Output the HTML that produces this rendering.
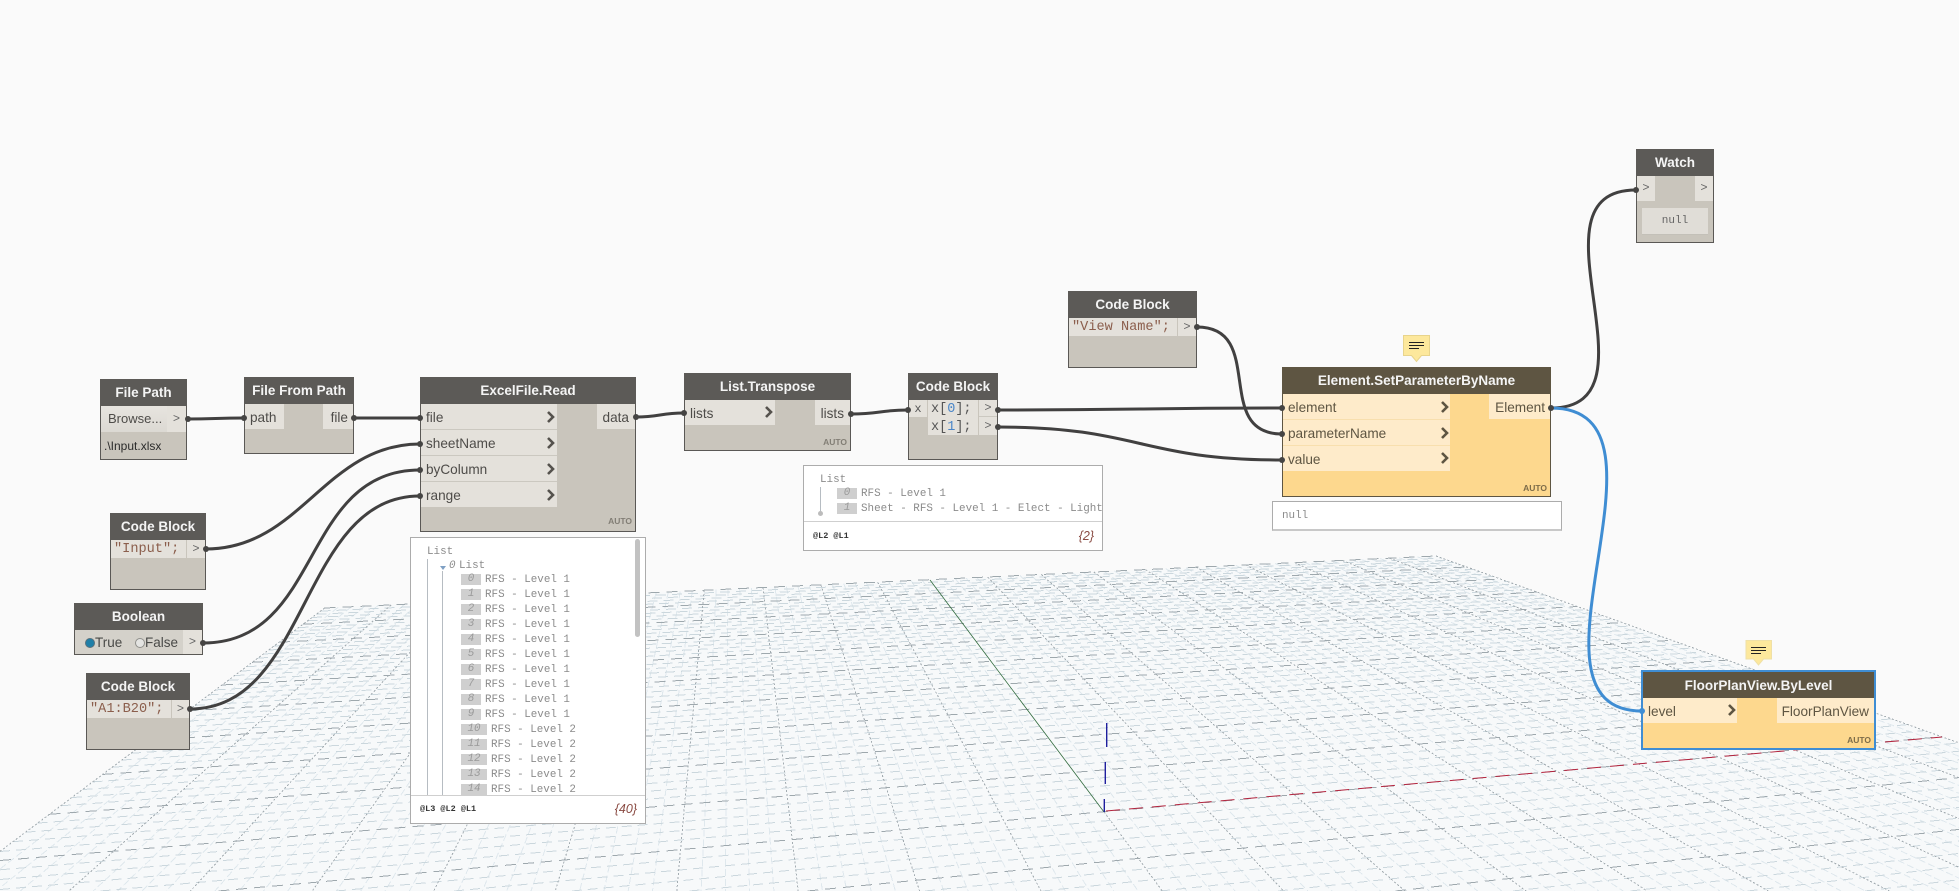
<!DOCTYPE html>
<html>
<head>
<meta charset="utf-8">
<title>Dynamo Graph</title>
<style>
html,body{margin:0;padding:0;width:1959px;height:891px;overflow:hidden;background:#fafafa}
#c{position:relative;width:1959px;height:891px;overflow:hidden;background:#fafafa;font-family:"Liberation Sans",sans-serif}
svg.l{position:absolute;left:0;top:0}
.n{position:absolute;box-sizing:border-box;background:#c9c5bc;border:1px solid #5a5855}
.y{background:#fdd88e;border-color:#5e5542}
.h{position:absolute;left:-1px;right:-1px;top:-1px;background:#5c5a57;color:#f4f4f4;font-weight:bold;font-size:13.5px;text-align:center}
.y .h{background:#5e5542}
.a{position:absolute;white-space:pre}
.r{position:absolute;background:#e4e1db;color:#4e4c49;font-size:13.6px;white-space:pre;box-sizing:border-box}
.y .r{background:#feebca;color:#5e5542}
.auto{position:absolute;font-size:8.5px;font-weight:bold;color:#827e75;right:3px;bottom:2px;line-height:11px}
.y .auto{color:#7d6c49}
.m{font-family:"Liberation Mono",monospace}
.s{color:#8b5e4c;font-size:13.6px}
.g{color:#666;font-size:12px;text-align:center}
.p{position:absolute;box-sizing:border-box;background:#fff;border:1px solid #acacac;overflow:hidden;font-family:"Liberation Mono",monospace;font-size:10.9px;color:#8b8b8b}
.p .i{position:absolute;height:11px;line-height:11px;background:#cfcfcf;color:#9a9a9a;font-style:italic;text-align:center;width:20px}
.p .i.w{width:26px}
.p .t{position:absolute;line-height:13px;white-space:pre}
.p .v{position:absolute;width:1px;background:#b6bcc2}
.p .f{position:absolute;left:0;right:0;bottom:0;background:#fff;border-top:1px solid #cfcfcf}
.f b{position:absolute;font-size:8.5px;color:#333;white-space:pre}
.f i{position:absolute;font-family:"Liberation Sans",sans-serif;font-size:12.5px;color:#8a4b43;white-space:pre}
</style>
</head>
<body>
<div id="c">
<svg class="l" id="grid" width="1959" height="891" viewBox="0 0 1959 891"></svg>

<svg class="l" width="1959" height="891" viewBox="0 0 1959 891">
<g fill="none">
<path d="M1106 811L1942 737" stroke="#b3233d" stroke-width="1" stroke-dasharray="14 9"/>
<path d="M1104 812L930 580" stroke="#2f6a3c" stroke-width="0.8"/>
<path d="M1106.7 723V747M1105.3 762V784M1104.3 799V812" stroke="#1f1f9e" stroke-width="1.4"/>
<g stroke="#414040" stroke-width="3" stroke-linecap="round">
<path d="M187 419C215 419 216 418 244 418"/>
<path d="M354 418C387 418 387 418 420 418"/>
<path d="M636 417C660 417 660 413 684 413"/>
<path d="M851 414C880 414 880 410 908 410"/>
<path d="M998 410C1140 410 1140 408 1282 408"/>
<path d="M998 427C1140 427 1140 460 1282 460"/>
<path d="M1197 327C1267 327 1212 434 1282 434"/>
<path d="M206 549C301 549 325 444 420 444"/>
<path d="M203 643C323 643 300 470 420 470"/>
<path d="M190 709C310 709 300 496 420 496"/>
<path d="M1551 408C1666 408 1521 190 1636 190"/>
</g>
<path d="M1551 408C1691 408 1506 711 1642 711" stroke="#3f8dd3" stroke-width="3" stroke-linecap="round"/>
</g>
</svg>

<!-- File Path -->
<div class="n" style="left:100px;top:379px;width:87px;height:81px">
<div class="h" style="height:27px;line-height:28px">File Path</div>
<div class="r" style="left:0;top:26px;width:66px;height:26px;line-height:26px;padding-left:7px;font-size:13px;background:linear-gradient(#e7e4df,#dcd9d3)">Browse...</div>
<div class="r m g" style="left:66px;top:26px;width:19px;height:26px;line-height:26px">&gt;</div>
<div class="a" style="left:3px;top:58px;font-size:12px;line-height:16px;color:#2b2b2b">.\Input.xlsx</div>
</div>

<!-- File From Path -->
<div class="n" style="left:244px;top:377px;width:110px;height:77px">
<div class="h" style="height:27px;line-height:28px">File From Path</div>
<div class="r" style="left:0;top:26px;width:39px;height:25px;line-height:27px;padding-left:5px">path</div>
<div class="r" style="right:0;top:26px;width:30px;height:25px;line-height:27px;text-align:right;padding-right:5px">file</div>
</div>

<!-- ExcelFile.Read -->
<div class="n" style="left:420px;top:377px;width:216px;height:155px">
<div class="h" style="height:27px;line-height:28px">ExcelFile.Read</div>
<div class="r" style="left:0;top:26px;width:136px;height:26px;line-height:27px;padding-left:5px;border-bottom:1px solid #cbc8c0">file</div>
<div class="r" style="left:0;top:52px;width:136px;height:26px;line-height:27px;padding-left:5px;border-bottom:1px solid #cbc8c0">sheetName</div>
<div class="r" style="left:0;top:78px;width:136px;height:26px;line-height:27px;padding-left:5px;border-bottom:1px solid #cbc8c0">byColumn</div>
<div class="r" style="left:0;top:104px;width:136px;height:25px;line-height:27px;padding-left:5px">range</div>
<div class="r" style="right:0;top:26px;width:38px;height:25px;line-height:27px;text-align:right;padding-right:6px">data</div>
<div class="auto" style="bottom:4px">AUTO</div>
</div>

<!-- Code Block Input -->
<div class="n" style="left:110px;top:513px;width:96px;height:77px">
<div class="h" style="height:27px;line-height:28px">Code Block</div>
<div class="r m s" style="left:0;top:26px;width:75px;height:18px;line-height:20px;padding-left:3px;overflow:hidden">"Input";</div>
<div class="r m g" style="left:76px;top:26px;width:18px;height:18px;line-height:18px">&gt;</div>
</div>

<!-- Boolean -->
<div class="n" style="left:74px;top:603px;width:129px;height:52px">
<div class="h" style="height:27px;line-height:28px">Boolean</div>
<div class="a" style="left:0;top:26px;width:108px;height:24px;background:#d4d1ca"></div>
<div class="r m g" style="left:108px;top:26px;width:19px;height:24px;line-height:24px">&gt;</div>
<div class="a" style="left:10px;top:34px;width:8px;height:8px;border-radius:50%;background:#1f7fa8;border:1px solid #58707c"></div>
<div class="a" style="left:20px;top:30px;font-size:13.5px;line-height:18px;color:#4a4a48">True</div>
<div class="a" style="left:60px;top:34px;width:8px;height:8px;border-radius:50%;background:#e4e4e2;border:1px solid #8f8f8b"></div>
<div class="a" style="left:70px;top:30px;font-size:13.5px;line-height:18px;color:#4a4a48">False</div>
</div>

<!-- Code Block A1 -->
<div class="n" style="left:86px;top:673px;width:104px;height:77px">
<div class="h" style="height:27px;line-height:28px">Code Block</div>
<div class="r m s" style="left:0;top:26px;width:84px;height:18px;line-height:20px;padding-left:3px;overflow:hidden">"A1:B20";</div>
<div class="r m g" style="left:85px;top:26px;width:17px;height:18px;line-height:18px">&gt;</div>
</div>

<!-- List.Transpose -->
<div class="n" style="left:684px;top:373px;width:167px;height:78px">
<div class="h" style="height:27px;line-height:28px">List.Transpose</div>
<div class="r" style="left:0;top:26px;width:90px;height:25px;line-height:27px;padding-left:5px">lists</div>
<div class="r" style="right:0;top:26px;width:35px;height:25px;line-height:27px;text-align:right;padding-right:6px">lists</div>
<div class="auto">AUTO</div>
</div>

<!-- Code Block x -->
<div class="n" style="left:908px;top:373px;width:90px;height:87px">
<div class="h" style="height:27px;line-height:28px">Code Block</div>
<div class="r m" style="left:0;top:26px;width:18px;height:17px;line-height:18px;text-align:center;font-size:12px;color:#555">x</div>
<div class="r m" style="left:19px;top:26px;width:50px;height:35px;line-height:17.5px;padding:1px 0 0 3px;font-size:13.5px;color:#555;white-space:pre">x[<span style="color:#4a86c8">0</span>];
x[<span style="color:#4a86c8">1</span>];</div>
<div class="r m g" style="left:70px;top:26px;width:18px;height:17px;line-height:17px;border-bottom:1px solid #cbc8c0">&gt;</div>
<div class="r m g" style="left:70px;top:43px;width:18px;height:18px;line-height:18px">&gt;</div>
</div>

<!-- Code Block View Name -->
<div class="n" style="left:1068px;top:291px;width:129px;height:77px">
<div class="h" style="height:27px;line-height:28px">Code Block</div>
<div class="r m s" style="left:0;top:26px;width:108px;height:18px;line-height:20px;padding-left:3px;overflow:hidden">"View Name";</div>
<div class="r m g" style="left:109px;top:26px;width:18px;height:18px;line-height:18px">&gt;</div>
</div>

<!-- Element.SetParameterByName -->
<div class="n y" style="left:1282px;top:367px;width:269px;height:130px">
<div class="h" style="height:27px;line-height:28px">Element.SetParameterByName</div>
<div class="r" style="left:0;top:26px;width:167px;height:26px;line-height:27px;padding-left:5px;border-bottom:1px solid #f8dfae">element</div>
<div class="r" style="left:0;top:52px;width:167px;height:26px;line-height:27px;padding-left:5px;border-bottom:1px solid #f8dfae">parameterName</div>
<div class="r" style="left:0;top:78px;width:167px;height:25px;line-height:27px;padding-left:5px">value</div>
<div class="r" style="right:0;top:26px;width:61px;height:25px;line-height:27px;text-align:right;padding-right:5px">Element</div>
<div class="auto">AUTO</div>
</div>

<!-- Watch -->
<div class="n" style="left:1636px;top:149px;width:78px;height:94px">
<div class="h" style="height:27px;line-height:28px">Watch</div>
<div class="r m g" style="left:0;top:26px;width:18px;height:25px;line-height:25px">&gt;</div>
<div class="r m g" style="right:0;top:26px;width:18px;height:25px;line-height:25px">&gt;</div>
<div class="a m" style="left:5px;top:58px;width:66px;height:27px;line-height:27px;background:#e0ddd7;border-bottom:1px solid #c3c0b8;box-sizing:border-box;text-align:center;font-size:11px;color:#666">null</div>
</div>

<!-- FloorPlanView.ByLevel -->
<div class="n y" style="left:1641px;top:670px;width:235px;height:80px;border:2px solid #3f8dd3">
<div class="h" style="left:0;right:0;top:0;height:26px;line-height:27px">FloorPlanView.ByLevel</div>
<div class="r" style="left:0;top:26px;width:94px;height:25px;line-height:27px;padding-left:5px">level</div>
<div class="r" style="right:0;top:26px;width:97px;height:25px;line-height:27px;text-align:right;padding-right:5px">FloorPlanView</div>
<div class="auto">AUTO</div>
</div>

<!-- Preview: ExcelFile.Read -->
<div class="p" style="left:410px;top:537px;width:236px;height:287px">
<div class="t" style="left:16px;top:8px">List</div>
<div class="v" style="left:16px;top:21px;height:240px"></div>
<div class="t" style="left:38px;top:22px;font-style:italic">0</div>
<div class="t" style="left:48px;top:22px">List</div>
<div class="a" style="left:29px;top:28px;width:0;height:0;border-left:3.5px solid transparent;border-right:3.5px solid transparent;border-top:4px solid #7fa0c4"></div>
<div class="v" style="left:31px;top:33px;height:228px"></div>
<div class="i" style="left:50px;top:36px">0</div><div class="t" style="left:74px;top:36px">RFS - Level 1</div>
<div class="i" style="left:50px;top:51px">1</div><div class="t" style="left:74px;top:51px">RFS - Level 1</div>
<div class="i" style="left:50px;top:66px">2</div><div class="t" style="left:74px;top:66px">RFS - Level 1</div>
<div class="i" style="left:50px;top:81px">3</div><div class="t" style="left:74px;top:81px">RFS - Level 1</div>
<div class="i" style="left:50px;top:96px">4</div><div class="t" style="left:74px;top:96px">RFS - Level 1</div>
<div class="i" style="left:50px;top:111px">5</div><div class="t" style="left:74px;top:111px">RFS - Level 1</div>
<div class="i" style="left:50px;top:126px">6</div><div class="t" style="left:74px;top:126px">RFS - Level 1</div>
<div class="i" style="left:50px;top:141px">7</div><div class="t" style="left:74px;top:141px">RFS - Level 1</div>
<div class="i" style="left:50px;top:156px">8</div><div class="t" style="left:74px;top:156px">RFS - Level 1</div>
<div class="i" style="left:50px;top:171px">9</div><div class="t" style="left:74px;top:171px">RFS - Level 1</div>
<div class="i w" style="left:50px;top:186px">10</div><div class="t" style="left:80px;top:186px">RFS - Level 2</div>
<div class="i w" style="left:50px;top:201px">11</div><div class="t" style="left:80px;top:201px">RFS - Level 2</div>
<div class="i w" style="left:50px;top:216px">12</div><div class="t" style="left:80px;top:216px">RFS - Level 2</div>
<div class="i w" style="left:50px;top:231px">13</div><div class="t" style="left:80px;top:231px">RFS - Level 2</div>
<div class="i w" style="left:50px;top:246px">14</div><div class="t" style="left:80px;top:246px">RFS - Level 2</div>
<div class="a" style="left:224px;top:1px;width:5px;height:98px;background:#c2c2c2;border-radius:3px"></div>
<div class="f" style="height:27px">
<b style="left:9px;top:7px;line-height:12px">@L3 @L2 @L1</b>
<i style="right:8px;top:5px;line-height:16px">{40}</i>
</div>
</div>

<!-- Preview: Code Block -->
<div class="p" style="left:803px;top:465px;width:300px;height:86px">
<div class="t" style="left:16px;top:8px">List</div>
<div class="v" style="left:16px;top:21px;height:27px"></div>
<div class="a" style="left:14px;top:45px;width:5px;height:5px;border-radius:50%;background:#bcbcbc"></div>
<div class="i" style="left:33px;top:22px">0</div><div class="t" style="left:57px;top:22px">RFS - Level 1</div>
<div class="i" style="left:33px;top:37px">1</div><div class="t" style="left:57px;top:37px">Sheet - RFS - Level 1 - Elect - Lighting</div>
<div class="f" style="height:28px">
<b style="left:9px;top:8px;line-height:12px">@L2 @L1</b>
<i style="right:8px;top:6px;line-height:16px">{2}</i>
</div>
</div>

<!-- Preview: SetParameter null -->
<div class="p" style="left:1272px;top:501px;width:290px;height:30px;border-bottom:2px solid #c8c8c8">
<div class="t" style="left:9px;top:8px">null</div>
</div>

<!-- Overlay: chevrons, ports, notes -->
<svg class="l" width="1959" height="891" viewBox="0 0 1959 891">
<g fill="none" stroke="#55524d" stroke-width="2.6">
<path d="M548 412l5 5-5 5M548 438l5 5-5 5M548 464l5 5-5 5M548 490l5 5-5 5"/>
<path d="M766 407l5 5-5 5"/>
</g>
<g fill="none" stroke="#5e5542" stroke-width="2.6">
<path d="M1442 402l5 5-5 5M1442 428l5 5-5 5M1442 453l5 5-5 5"/>
<path d="M1729 705l5 5-5 5"/>
</g>
<g fill="#454443">
<circle cx="188" cy="419" r="3"/><circle cx="244" cy="418" r="3"/><circle cx="354" cy="418" r="3"/><circle cx="420" cy="418" r="3"/>
<circle cx="420" cy="444" r="3"/><circle cx="420" cy="470" r="3"/><circle cx="420" cy="496" r="3"/><circle cx="636" cy="417" r="3"/>
<circle cx="684" cy="413" r="3"/><circle cx="851" cy="414" r="3"/><circle cx="908" cy="410" r="3"/><circle cx="998" cy="410" r="3"/><circle cx="998" cy="427" r="3"/>
<circle cx="1197" cy="327" r="3"/><circle cx="1282" cy="408" r="3"/><circle cx="1282" cy="434" r="3"/><circle cx="1282" cy="460" r="3"/><circle cx="1551" cy="408" r="3"/>
<circle cx="206" cy="549" r="3"/><circle cx="203" cy="643" r="3"/><circle cx="190" cy="709" r="3"/><circle cx="1636" cy="190" r="3"/>
</g>
<circle cx="1642" cy="711" r="3" fill="#3f8dd3"/>
<g>
<path d="M1403.500 335.500h26v20h-8l-5 6-5-6h-8z" fill="#fde89c" stroke="#e8d48c"/>
<path d="M1409 342.500h15M1409 345.500h15M1409 348.500h10" stroke="#222" stroke-width="1" fill="none"/>
<path d="M1746 640.500h25.500v18.500h-8l-5 6-5-6h-7.500z" fill="#fde89c" stroke="#efe0a6"/>
<path d="M1751 647.500h15M1751 650.500h15M1751 653.500h10" stroke="#222" stroke-width="1" fill="none"/>
</g>
</svg>
</div>

<script>
(function(){
var G=.1752,H=.8422,A=837.7+1941.7*G,D=-75+736.7*G,
B=-505.7-505.7*G+1436*H,E=-180.7-180.7*G+556*H,W=1959,Ht=891;
function P(u,v){var U=u/50,V=v/50,w=1+G*U+H*V;
return [(A*U+B*V+1104)/w,(D*U+E*V+811.7)/w];}
function seg(a,b){
 var t0=0,t1=1,dx=b[0]-a[0],dy=b[1]-a[1],
 p=[-dx,dx,-dy,dy],q=[a[0],W-a[0],a[1],Ht-a[1]],i,r;
 for(i=0;i<4;i++){
  if(p[i]===0){if(q[i]<0)return '';continue;}
  r=q[i]/p[i];
  if(p[i]<0){if(r>t1)return '';if(r>t0)t0=r;}
  else{if(r<t0)return '';if(r<t1)t1=r;}
 }
 return 'M'+(a[0]+t0*dx).toFixed(1)+' '+(a[1]+t0*dy).toFixed(1)+'L'+(a[0]+t1*dx).toFixed(1)+' '+(a[1]+t1*dy).toFixed(1);
}
function clip(poly,inside,inter){
 var out=[],i,a,b;
 for(i=0;i<poly.length;i++){
  a=poly[i];b=poly[(i+1)%poly.length];
  if(inside(a)){out.push(a);if(!inside(b))out.push(inter(a,b));}
  else if(inside(b))out.push(inter(a,b));
 }
 return out;
}
function ix(x){return function(a,b){var t=(x-a[0])/(b[0]-a[0]);return [x,a[1]+t*(b[1]-a[1])];};}
function iy(y){return function(a,b){var t=(y-a[1])/(b[1]-a[1]);return [a[0]+t*(b[0]-a[0]),y];};}
var vmin=-25,mu='',mv='',nu='',nv='',i;
for(i=-50;i<=50;i++){
 if(i%5===0){ if(i!==0) mu+=seg(P(i,50),P(i,vmin)); else mu+=seg(P(0,0),P(0,vmin)); }
 else nu+=seg(P(i,50),P(i,vmin));
}
for(i=vmin;i<=50;i++){
 if(i%5===0) mv+=seg(P(-50,i),P(50,i)); else nv+=seg(P(-50,i),P(50,i));
}
var pl=[P(-50,50),P(50,50),P(50,vmin),P(-50,vmin)];
pl=clip(pl,function(p){return p[1]<=Ht;},iy(Ht));
pl=clip(pl,function(p){return p[0]>=0;},ix(0));
pl=clip(pl,function(p){return p[0]<=W;},ix(W));
var poly='M'+pl.map(function(p){return p[0].toFixed(1)+' '+p[1].toFixed(1);}).join('L')+'Z';
document.getElementById('grid').innerHTML=
'<path d="'+poly+'" fill="#f7f9fa"/>'+
'<g fill="none" stroke-width="1" shape-rendering="crispEdges">'+
'<path d="'+nu+'" stroke="#dfe8ed" stroke-dasharray="7 3"/>'+
'<path d="'+nv+'" stroke="#cbd7dd" stroke-dasharray="10 6"/>'+
'<path d="'+mu+'" stroke="#a3acb1" stroke-dasharray="2 2"/>'+
'<path d="'+mv+'" stroke="#9ea8ad" stroke-dasharray="11 7"/>'+
'</g>';
})();
</script>
</body>
</html>
